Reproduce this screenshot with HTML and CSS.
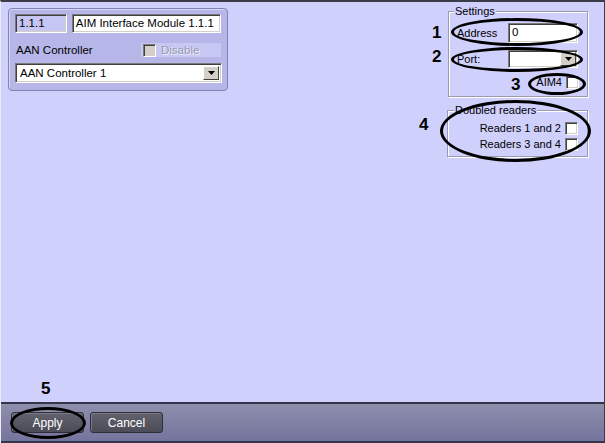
FILE: index.html
```html
<!DOCTYPE html>
<html lang="en">
<head>
  <meta charset="UTF-8">
  <title>AIM Interface Module</title>
  <link rel="stylesheet" href="styles.css">
</head>
<body>

  <div class="window">
    <div class="content">

      <div class="panel">
        <div class="row">
          <div class="field field-id">1.1.1</div>
          <div class="field field-name">AIM Interface Module 1.1.1</div>
        </div>
        <div class="row row-mid">
          <span class="label">AAN Controller</span>
          <div class="disable">
            <span class="check check-off"></span>
            <span class="dis-text">Disable</span>
          </div>
        </div>
        <div class="combo combo-wide">
          <span class="combo-text">AAN Controller 1</span>
          <span class="drop"><svg width="7" height="4" viewBox="0 0 7 4"><polygon points="0,0 7,0 3.5,4" fill="#000"/></svg></span>
        </div>
      </div>

      <div class="side">
        <div class="group settings">
          <span class="legend">Settings</span>
          <div class="srow">
            <span class="slabel">Address</span>
            <div class="field field-addr">0</div>
          </div>
          <div class="srow srow-port">
            <span class="slabel">Port:</span>
            <div class="combo combo-port">
              <span class="combo-text"></span>
              <span class="drop"><svg width="7" height="4" viewBox="0 0 7 4"><polygon points="0,0 7,0 3.5,4" fill="#000"/></svg></span>
            </div>
          </div>
          <div class="crow crow-aim">AIM4 <span class="check"></span></div>
        </div>

        <div class="group readers">
          <span class="legend">Doubled readers</span>
          <div class="crow">Readers 1 and 2 <span class="check"></span></div>
          <div class="crow">Readers 3 and 4 <span class="check"></span></div>
        </div>
      </div>

    </div>

    <div class="footer">
      <button class="btn">Apply</button>
      <button class="btn">Cancel</button>
    </div>

    <!-- callout marks -->
    <span class="num num-1">1</span>
    <span class="num num-2">2</span>
    <span class="num num-3">3</span>
    <span class="num num-4">4</span>
    <span class="num num-5">5</span>
    <span class="ring ring-1"></span>
    <span class="ring ring-2"></span>
    <span class="ring ring-3"></span>
    <span class="ring ring-4"></span>
    <span class="ring ring-5"></span>
  </div>

</body>
</html>
```

FILE: styles.css
```css
body {
  margin: 0;
  font-family: "Liberation Sans", Arial, sans-serif;
  font-size: 11px;
  color: #000;
  background: #d0d0fc;
}
.window {
  position: relative;
  width: 605px;
  height: 443px;
  box-sizing: border-box;
  border-top: 2px solid #3c3c48;
  border-left: 1px solid #ececf4;
  border-right: 1px solid #3c3c48;
  background: #d0d0fc;
  display: flex;
  flex-direction: column;
}
.content {
  height: 400px;
  box-sizing: border-box;
  flex-shrink: 0;
  display: flex;
  justify-content: space-between;
  align-items: flex-start;
  padding: 6px 16px 0 7px;
}

/* left panel */
.panel {
  width: 220px;
  box-sizing: border-box;
  padding: 5px 6px 7px 6px;
  background: #b6b6e8;
  border: 1px solid #8282b4;
  border-radius: 4px;
  box-shadow: inset 1px 1px 0 #d6d6f6;
}
.row {
  display: flex;
  gap: 5px;
}
.row-mid {
  justify-content: space-between;
  align-items: center;
  margin: 10px 0 6px;
  height: 14px;
}
.field {
  box-sizing: border-box;
  height: 19px;
  line-height: 17px;
  padding: 0 3px;
  background: #fff;
  border: 1px solid;
  border-color: #7a7a7a #fff #fff #7a7a7a;
  box-shadow: inset 1px 1px 0 #404040, inset -1px -1px 0 #d4d0c8;
  white-space: nowrap;
  overflow: hidden;
  font-size: 11.5px;
}
.field-id {
  width: 52px;
  background: #c6c6f4;
}
.field-name {
  width: 150px;
}
.label {
  font-size: 11.5px;
  padding-left: 1px;
}
.disable {
  width: 80px;
  height: 14px;
  display: flex;
  align-items: center;
  gap: 5px;
  padding-left: 2px;
  box-sizing: border-box;
  background: #c8c8f4;
}
.dis-text {
  color: #9a9ab0;
  font-size: 11.5px;
  text-shadow: 1px 1px 0 #eeeefc;
}
.combo {
  box-sizing: border-box;
  height: 20px;
  display: flex;
  align-items: center;
  justify-content: space-between;
  background: #fff;
  border: 1px solid;
  border-color: #7a7a7a #fff #fff #7a7a7a;
  box-shadow: inset 1px 1px 0 #404040, inset -1px -1px 0 #d4d0c8;
  padding: 2px;
}
.combo-wide {
  width: 207px;
  font-size: 11.5px;
}
.combo-text {
  padding-left: 2px;
}
.drop {
  width: 16px;
  height: 100%;
  box-sizing: border-box;
  display: flex;
  align-items: center;
  justify-content: center;
  background: #d4d0c8;
  border: 1px solid;
  border-color: #fff #404040 #404040 #fff;
}

/* right side */
.side {
  width: 141px;
  margin-top: 3px;
}
.group {
  box-sizing: border-box;
  border: 1px solid #9a9ab0;
  box-shadow: inset 1px 1px 0 #fff, 1px 1px 0 #fff;
}
.legend {
  display: block;
  width: fit-content;
  margin: -7px 0 0 -3px;
  padding: 0 1px;
  line-height: 13px;
  background: #d0d0fc;
}
.settings {
  width: 140px;
  margin-left: 1px;
  padding: 0 9px 7px 8px;
}
.srow {
  display: flex;
  align-items: center;
  justify-content: space-between;
  margin-top: 5px;
}
.srow-port {
  margin-top: 7px;
}
.field-addr {
  width: 70px;
  height: 20px;
}
.combo-port {
  width: 70px;
  height: 18px;
  padding: 1px;
}
.crow {
  display: flex;
  justify-content: flex-end;
  align-items: center;
  gap: 4px;
  height: 13px;
  line-height: 13px;
}
.crow-aim {
  margin-top: 8px;
  margin-right: -1px;
}
.readers {
  width: 141px;
  margin-top: 13px;
  padding: 0 9px 5px 8px;
}
.readers .legend {
  margin-left: -2px;
}
.readers .crow {
  margin-top: 3px;
}
.readers .crow:first-of-type {
  margin-top: 5px;
}
.check {
  width: 13px;
  height: 13px;
  box-sizing: border-box;
  background: #fff;
  border: 1px solid;
  border-color: #7a7a7a #fff #fff #7a7a7a;
  box-shadow: inset 1px 1px 0 #404040, inset -1px -1px 0 #d4d0c8;
}
.check-off {
  background: #d4d0c8;
}

/* bottom bar */
.footer {
  flex: 1;
  display: flex;
  gap: 6px;
  padding: 8px 0 0 10px;
  border-top: 2px solid #34344a;
  border-bottom: 2px solid #34344a;
  background: linear-gradient(#8e8eac, #74749e);
}
.btn {
  width: 73px;
  height: 21px;
  padding: 0;
  font-family: "Liberation Sans", Arial, sans-serif;
  font-size: 12px;
  color: #fff;
  background: linear-gradient(#62626e, #4c4c58);
  border: 1px solid #2e2e3a;
  border-radius: 3px;
  box-shadow: inset 1px 1px 0 #7a7a88;
}

/* callouts */
.num {
  position: absolute;
  font-size: 17px;
  font-weight: bold;
  line-height: 17px;
}
.num-1 { left: 431px; top: 22px; }
.num-2 { left: 431px; top: 46px; }
.num-3 { left: 510px; top: 74px; }
.num-4 { left: 418px; top: 114px; }
.num-5 { left: 40px; top: 378px; }
.ring {
  position: absolute;
  box-sizing: border-box;
  border: 3px solid #000;
  border-radius: 50%;
}
.ring-1 { left: 450px; top: 16px; width: 132px; height: 28px; }
.ring-2 { left: 450px; top: 45px; width: 132px; height: 25px; }
.ring-3 { left: 527px; top: 71px; width: 58px; height: 22px; }
.ring-4 { left: 439px; top: 98px; width: 151px; height: 62px; }
.ring-5 { left: 9px; top: 405px; width: 76px; height: 32px; }
```
